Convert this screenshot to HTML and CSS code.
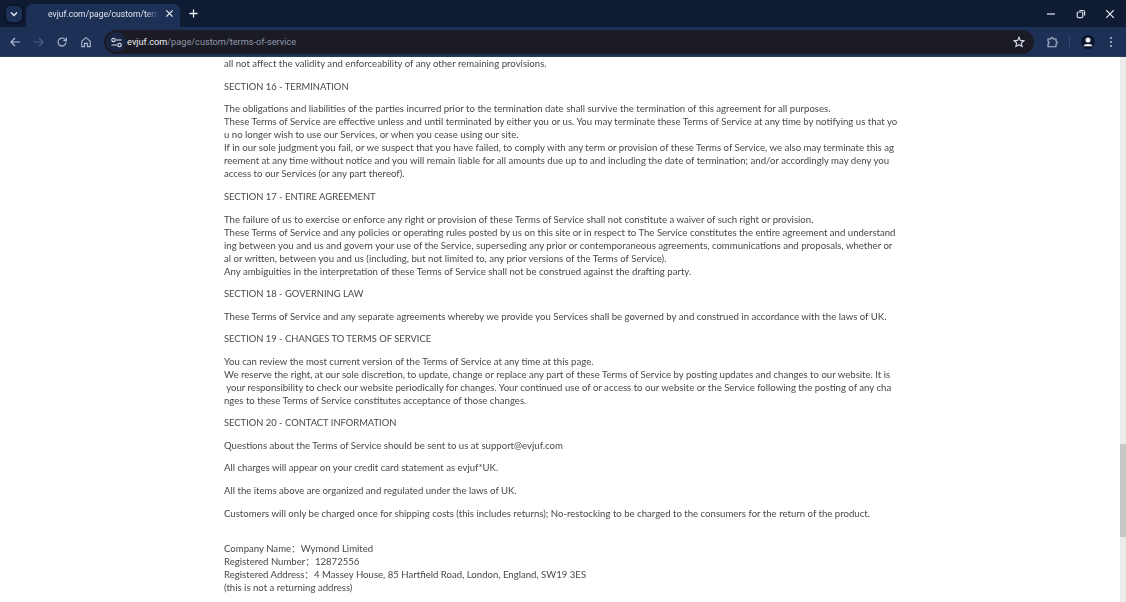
FILE: index.html
```html
<!DOCTYPE html>
<html lang="en">
<head>
<meta charset="utf-8">
<title>Terms of Service</title>
<link rel="stylesheet" href="styles.css">
</head>
<body>
<div class="browser">
  <header class="tabstrip">
    <div class="tabs-left">
      <button class="tab-search"><svg width="10" height="10" viewBox="0 0 10 10"><path d="M2 3.5 5 6.5 8 3.5" fill="none" stroke="#e4e9f2" stroke-width="1.5"/></svg></button>
      <div class="tab">
        <span class="tab-title">evjuf.com/page/custom/terms-</span>
        <svg class="tab-close" width="9" height="9" viewBox="0 0 10 10"><path d="M1.5 1.5 8.5 8.5M8.5 1.5 1.5 8.5" stroke="#e8ecf4" stroke-width="1.4"/></svg>
      </div>
      <svg class="new-tab" width="9" height="9" viewBox="0 0 10 10"><path d="M5 .5V9.5M.5 5H9.5" stroke="#eef1f6" stroke-width="1.4"/></svg>
    </div>
    <div class="window-controls">
      <svg width="10" height="10" viewBox="0 0 10 10"><path d="M1 5H9" stroke="#d5dbe6" stroke-width="1.3"/></svg>
      <svg width="10" height="10" viewBox="0 0 10 10"><rect x="1.2" y="3" width="5.6" height="5.6" rx="1.2" fill="none" stroke="#d5dbe6" stroke-width="1.2"/><path d="M3.4 1.5H7.2A1.4 1.4 0 0 1 8.6 2.9V6.6" fill="none" stroke="#d5dbe6" stroke-width="1.2"/></svg>
      <svg width="10" height="10" viewBox="0 0 10 10"><path d="M1.2 1.2 8.8 8.8M8.8 1.2 1.2 8.8" stroke="#e8ecf4" stroke-width="1.2"/></svg>
    </div>
  </header>
  <nav class="toolbar">
    <div class="nav-buttons">
      <svg width="12" height="12" viewBox="0 0 12 12"><path d="M11 6H2M6 2 2 6 6 10" fill="none" stroke="#aebbd2" stroke-width="1.2"/></svg>
      <svg width="12" height="12" viewBox="0 0 12 12"><path d="M1 6H10M6 2 10 6 6 10" fill="none" stroke="#4f5f7e" stroke-width="1.2"/></svg>
      <svg width="12" height="12" viewBox="0 0 12 12"><path d="M10 6.2A4 4 0 1 1 8.8 3.2L10.2 4.4M10.4 1.6V4.6H7.4" fill="none" stroke="#aebbd2" stroke-width="1.1"/></svg>
      <svg width="12" height="12" viewBox="0 0 12 12"><path d="M1.8 5.2 6 1.6 10.2 5.2V10.6H7.4V7.4H4.6V10.6H1.8Z" fill="none" stroke="#aebbd2" stroke-width="1.1"/></svg>
    </div>
    <div class="omnibox">
      <span class="site-info"><svg width="11" height="11" viewBox="0 0 11 11"><path d="M5 3H10.5M0.5 8H6" stroke="#dfe5f0" stroke-width="1.2"/><circle cx="2.5" cy="3" r="1.7" fill="none" stroke="#dfe5f0" stroke-width="1.1"/><circle cx="8.5" cy="8" r="1.7" fill="none" stroke="#dfe5f0" stroke-width="1.1"/></svg></span>
      <span class="url"><span class="url-host">evjuf.com</span>/page/custom/terms-of-service</span>
      <svg class="star" width="12" height="12" viewBox="0 0 12 12"><path d="M6 1.2 7.4 4.4 10.9 4.7 8.3 7 9.1 10.5 6 8.7 2.9 10.5 3.7 7 1.1 4.7 4.6 4.4Z" fill="none" stroke="#d8dee9" stroke-width="1.1"/></svg>
    </div>
    <div class="tool-buttons">
      <svg width="12" height="12" viewBox="0 0 12 12"><path d="M2 3H4.4C4.4 1.2 7.2 1.2 7.2 3H10V5.4C11.6 5.4 11.6 8 10 8V10.8H2V8C3.4 8 3.4 5.4 2 5.4Z" fill="none" stroke="#aebbd2" stroke-width="1.1"/></svg>
      <span class="divider"></span>
      <svg class="avatar" width="14" height="14" viewBox="0 0 14 14"><circle cx="7" cy="7" r="7" fill="#0d1730"/><circle cx="7" cy="5" r="2.5" fill="#f0f3f8"/><path d="M2.4 11.2C3.2 8.4 10.8 8.4 11.6 11.2Z" fill="#f0f3f8"/></svg>
      <svg class="menu" width="4" height="12" viewBox="0 0 4 12"><circle cx="2" cy="2" r="1.1" fill="#aebbd2"/><circle cx="2" cy="6" r="1.1" fill="#aebbd2"/><circle cx="2" cy="10" r="1.1" fill="#aebbd2"/></svg>
    </div>
  </nav>
  <div class="viewport">
    <main class="page">
      <p>all not affect the validity and enforceability of any other remaining provisions.</p>
      <p class="heading">SECTION 16 - TERMINATION</p>
      <p>The obligations and liabilities of the parties incurred prior to the termination date shall survive the termination of this agreement for all purposes.<br>
      These Terms of Service are effective unless and until terminated by either you or us. You may terminate these Terms of Service at any time by notifying us that yo<br>
      u no longer wish to use our Services, or when you cease using our site.<br>
      If in our sole judgment you fail, or we suspect that you have failed, to comply with any term or provision of these Terms of Service, we also may terminate this ag<br>
      reement at any time without notice and you will remain liable for all amounts due up to and including the date of termination; and/or accordingly may deny you<br>
      access to our Services (or any part thereof).</p>
      <p class="heading">SECTION 17 - ENTIRE AGREEMENT</p>
      <p>The failure of us to exercise or enforce any right or provision of these Terms of Service shall not constitute a waiver of such right or provision.<br>
      These Terms of Service and any policies or operating rules posted by us on this site or in respect to The Service constitutes the entire agreement and understand<br>
      ing between you and us and govern your use of the Service, superseding any prior or contemporaneous agreements, communications and proposals, whether or<br>
      al or written, between you and us (including, but not limited to, any prior versions of the Terms of Service).<br>
      Any ambiguities in the interpretation of these Terms of Service shall not be construed against the drafting party.</p>
      <p class="heading">SECTION 18 - GOVERNING LAW</p>
      <p>These Terms of Service and any separate agreements whereby we provide you Services shall be governed by and construed in accordance with the laws of UK.</p>
      <p class="heading">SECTION 19 - CHANGES TO TERMS OF SERVICE</p>
      <p>You can review the most current version of the Terms of Service at any time at this page.<br>
      We reserve the right, at our sole discretion, to update, change or replace any part of these Terms of Service by posting updates and changes to our website. It is<br>
      &nbsp;your responsibility to check our website periodically for changes. Your continued use of or access to our website or the Service following the posting of any cha<br>
      nges to these Terms of Service constitutes acceptance of those changes.</p>
      <p class="heading">SECTION 20 - CONTACT INFORMATION</p>
      <p>Questions about the Terms of Service should be sent to us at support@evjuf.com</p>
      <p>All charges will appear on your credit card statement as evjuf*UK.</p>
      <p>All the items above are organized and regulated under the laws of UK.</p>
      <p>Customers will only be charged once for shipping costs (this includes returns); No-restocking to be charged to the consumers for the return of the product.</p>
      <p class="company"><br>
      Company Name：Wymond Limited<br>
      Registered Number：12872556<br>
      Registered Address：4 Massey House, 85 Hartfield Road, London, England, SW19 3ES<br>
      (this is not a returning address)</p>
    </main>
    <div class="scrollbar"><div class="thumb"></div></div>
  </div>
</div>
</body>
</html>
```
FILE: styles.css
```css
* { box-sizing: border-box; }
html, body { margin: 0; height: 100%; overflow: hidden; background: #fff; }
button { border: 0; padding: 0; }
.browser { display: flex; flex-direction: column; height: 602px; }
.tabstrip { flex: 0 0 27px; display: flex; justify-content: space-between; align-items: stretch; background: #0f1b33; }
.tabs-left { display: flex; align-items: center; }
.tab-search { width: 16px; height: 16px; margin-left: 6px; border-radius: 5px; background: #1d3157; box-shadow: 0 0 0 2px #0b1428; display: flex; align-items: center; justify-content: center; }
.tab { width: 154px; height: 23px; margin: 4px 0 0 4px; padding: 0 6px 4px 22px; border-radius: 7px 7px 0 0; background: #1d3157; display: flex; align-items: center; }
.tab-title { flex: 1; min-width: 0; white-space: nowrap; font: 8.6px/12px "Roboto", "Liberation Sans", sans-serif; color: #dfe4ee; -webkit-mask-image: linear-gradient(90deg, #000 88%, transparent); mask-image: linear-gradient(90deg, #000 88%, transparent); }
.tab-close { margin-left: 6px; }
.new-tab { margin-left: 9px; }
.window-controls { display: flex; align-items: center; gap: 19.5px; padding-right: 11px; }
.toolbar { flex: 0 0 30px; display: flex; align-items: center; background: #1d3157; box-shadow: inset 0 -1px 0 #2a3a58; }
.nav-buttons { display: flex; align-items: center; gap: 11.7px; padding-left: 9px; }
.omnibox { flex: 1; height: 24px; margin-left: 12px; padding: 0 9px 0 2px; border-radius: 12px; background: #1b1b25; display: flex; align-items: center; }
.site-info { width: 20px; height: 20px; border-radius: 10px; background: #1b2644; display: flex; align-items: center; justify-content: center; }
.url { flex: 1; margin-left: 1px; font: 9.2px/14px "Roboto", "Liberation Sans", sans-serif; color: #8e97a8; }
.url-host { color: #eef1f6; }
.tool-buttons { display: flex; align-items: center; padding: 0 13px 0 12px; }
.divider { width: 1px; height: 12px; margin-left: 11px; background: #34476b; }
.avatar { margin-left: 11.5px; }
.menu { margin-left: 14px; }
.viewport { flex: 1; min-height: 0; display: flex; overflow: hidden; }
.page { flex: 1; min-width: 0; padding: .4px 0 0 224px; font: 9.6px/13px "Lato", "Noto Sans", "Noto Sans CJK SC", sans-serif; color: #484848; white-space: nowrap; overflow: hidden; filter: blur(.25px); }
.page p { margin: 0 0 9.55px; }
.page .heading { font-size: 9.4px; }
.scrollbar { flex: 0 0 6px; background: #ececec; padding-top: 387px; }
.thumb { height: 93px; background: #c8c8c8; }
```
